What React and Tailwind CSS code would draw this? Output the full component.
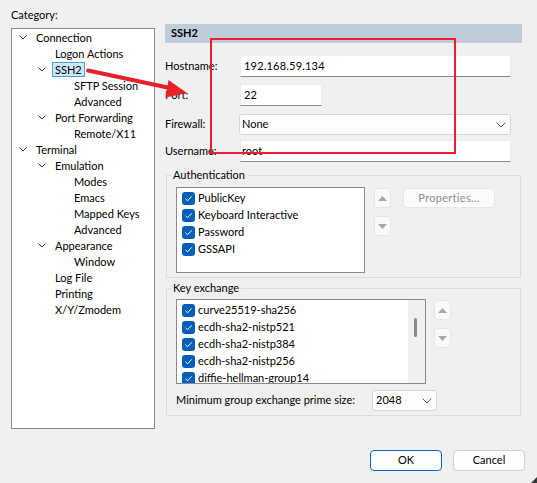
import React from "react";

const Chevron = () => (
  <svg width="8" height="5" viewBox="0 0 8 5">
    <path d="M0.5 0.5L4 4L7.5 0.5" fill="none" stroke="#2b2b2b" strokeWidth="1" />
  </svg>
);

const SelChevron = () => (
  <svg width="10" height="6" viewBox="0 0 10 6">
    <path d="M0.5 0.5L5 5L9.5 0.5" fill="none" stroke="#5a5a5a" strokeWidth="1" />
  </svg>
);

const Check = () => (
  <svg width="13" height="13" viewBox="0 0 13 13" className="shrink-0">
    <rect x="0" y="0" width="13" height="13" rx="3" fill="#005fb8" />
    <path d="M3.5 6.8L5.6 8.8L9.6 4.4" fill="none" stroke="#ffffff" strokeWidth="1" />
  </svg>
);

const Tri = ({ up }) => (
  <svg width="9" height="5" viewBox="0 0 9 5">
    {up ? <path d="M0 5L4.5 0L9 5Z" fill="#a8a8a8" /> : <path d="M0 0L4.5 5L9 0Z" fill="#a8a8a8" />}
  </svg>
);

const padCls = ["pl-[6px]", "pl-[25px]", "pl-[44px]"];

const tree = [
  { l: 0, t: "Connection", c: true },
  { l: 1, t: "Logon Actions" },
  { l: 1, t: "SSH2", c: true, sel: true },
  { l: 2, t: "SFTP Session" },
  { l: 2, t: "Advanced" },
  { l: 1, t: "Port Forwarding", c: true },
  { l: 2, t: "Remote/X11" },
  { l: 0, t: "Terminal", c: true },
  { l: 1, t: "Emulation", c: true },
  { l: 2, t: "Modes" },
  { l: 2, t: "Emacs" },
  { l: 2, t: "Mapped Keys" },
  { l: 2, t: "Advanced" },
  { l: 1, t: "Appearance", c: true },
  { l: 2, t: "Window" },
  { l: 1, t: "Log File" },
  { l: 1, t: "Printing" },
  { l: 1, t: "X/Y/Zmodem" },
];

const SmallBtn = ({ up }) => (
  <div className="w-[17px] h-[20px] flex items-center justify-center bg-[#f9f9f9] border border-[#e6e6e6] rounded-[3px]">
    <Tri up={up} />
  </div>
);

const Item = ({ t }) => (
  <div className="flex items-center h-[17px] gap-[3px] whitespace-nowrap">
    <Check />
    <span>{t}</span>
  </div>
);

export default function App() {
  return (
    <div
      className="relative w-[537px] h-[483px] bg-[#f0f0f0] text-[11px] text-black overflow-hidden"
      style={{ fontFamily: "Lato, 'Liberation Sans', sans-serif" }}
    >
      <div className="flex px-[11px] gap-[10px]">
        {/* Left column */}
        <div className="w-[144px] pt-[7px] flex flex-col">
          <div className="leading-[16px] h-[16px]">Category:</div>
          <div className="mt-[5px] h-[401px] bg-white border border-[#868a94]">
            {tree.map((r, i) => (
              <div key={i} className={`flex h-[16px] items-center ${padCls[r.l]}`}>
                <div className="w-[10px] flex justify-center">{r.c && <Chevron />}</div>
                <span
                  className={`ml-[5px] px-[2px] h-[15px] leading-[13px] border whitespace-nowrap ${
                    r.sel ? "border-[#4f9fe0] bg-[#cce8ff]" : "border-transparent"
                  }`}
                >
                  {r.t}
                </span>
              </div>
            ))}
          </div>
        </div>

        {/* Right column */}
        <div className="w-[357px] pt-[24px] flex flex-col">
          <div className="h-[19px] bg-[#bfcddb] pl-[6px] flex items-center font-bold">SSH2</div>

          <div className="flex items-center mt-[12px]">
            <span className="w-[75px]">Hostname:</span>
            <div className="w-[271px] h-[22px] bg-white border border-[#ececec] border-b-[#8a8a8a] flex items-center pl-[3px] tracking-[0.2px]">
              192.168.59.134
            </div>
          </div>
          <div className="flex items-center mt-[7px]">
            <span className="w-[75px]">Port:</span>
            <div className="w-[82px] h-[22px] bg-white border border-[#ececec] border-b-[#8a8a8a] flex items-center pl-[3px]">
              22
            </div>
          </div>
          <div className="flex items-center mt-[8px]">
            <span className="w-[75px]">Firewall:</span>
            <div className="ml-[-1px] w-[272px] h-[21px] bg-[#fdfdfd] border border-[#d6d6d6] rounded-[3px] flex items-center justify-between pl-[2px] pr-[4px]">
              <span>None</span>
              <SelChevron />
            </div>
          </div>
          <div className="flex items-center mt-[5px]">
            <span className="w-[75px]">Username:</span>
            <div className="w-[271px] h-[22px] bg-white border border-[#ececec] border-b-[#8a8a8a] flex items-center pl-[1px]">
              root
            </div>
          </div>

          <fieldset className="mt-[5px] ml-[1px] w-[355px] border border-[#dcdcdc] pl-[9px] pt-[4px] pb-[4px]">
            <legend className="ml-[-5px] px-[2px] leading-[16px]">Authentication</legend>
            <div className="flex items-start">
              <div className="w-[189px] h-[86px] bg-white border border-[#868a94] pl-[5px] pt-[2px]">
                <Item t="PublicKey" />
                <Item t="Keyboard Interactive" />
                <Item t="Password" />
                <Item t="GSSAPI" />
              </div>
              <div className="ml-[9px] pt-[1px] flex flex-col gap-[8px]">
                <SmallBtn up />
                <SmallBtn />
              </div>
              <div className="ml-[12px] mt-[1px] w-[92px] h-[20px] bg-[#fbfbfb] border border-[#e6e6e6] rounded-[4px] flex items-center justify-center text-[#8d8d8d] tracking-[0.3px]">
                Properties...
              </div>
            </div>
          </fieldset>

          <fieldset className="mt-[2px] ml-[1px] w-[355px] border border-[#dcdcdc] pl-[9px] pt-[3px] pb-[4px]">
            <legend className="ml-[-5px] px-[2px] leading-[16px]">Key exchange</legend>
            <div className="flex items-start">
              <div className="w-[250px] h-[85px] bg-white border border-[#868a94] flex overflow-hidden">
                <div className="flex-1 pl-[5px] pt-[2px]">
                  <Item t="curve25519-sha256" />
                  <Item t="ecdh-sha2-nistp521" />
                  <Item t="ecdh-sha2-nistp384" />
                  <Item t="ecdh-sha2-nistp256" />
                  <Item t="diffie-hellman-group14" />
                </div>
                <div className="w-[17px] bg-[#f0f0f0] pl-[6px] pt-[18px]">
                  <div className="w-[3px] h-[19px] rounded-full bg-[#8a8a8a]" />
                </div>
              </div>
              <div className="ml-[8px] pt-[1px] flex flex-col gap-[8px]">
                <SmallBtn up />
                <SmallBtn />
              </div>
            </div>
            <div className="flex items-center mt-[6px]">
              <span className="w-[196px] whitespace-nowrap">Minimum group exchange prime size:</span>
              <div className="w-[65px] h-[21px] bg-[#fdfdfd] border border-[#d6d6d6] rounded-[3px] flex items-center justify-between pl-[3px] pr-[4px]">
                <span>2048</span>
                <SelChevron />
              </div>
            </div>
          </fieldset>
        </div>
      </div>

      <div className="flex justify-end gap-[11px] pr-[12px] mt-[21px]">
        <div className="w-[72px] h-[21px] bg-white border border-[#0067c0] rounded-[4px] flex items-center justify-center">
          OK
        </div>
        <div className="w-[72px] h-[21px] bg-[#fdfdfd] border border-[#d0d0d0] rounded-[4px] flex items-center justify-center">
          Cancel
        </div>
      </div>

      {/* annotations */}
      <div className="absolute left-[210px] top-[38px] w-[246px] h-[116px] border-2 border-[#e8202a] pointer-events-none" />
      <svg className="absolute left-0 top-0 pointer-events-none" width="537" height="483" viewBox="0 0 537 483">
        <path d="M88 70.5 L170 88" stroke="#e8202a" strokeWidth="4" strokeLinecap="round" />
        <path d="M187 93 L168.5 80 L165.5 97.5 Z" fill="#e8202a" />
      </svg>
      <svg className="absolute right-0 bottom-0" width="6" height="6" viewBox="0 0 6 6">
        <path d="M6 0 L6 6 L0 6 Z" fill="#3a3a3a" />
      </svg>
    </div>
  );
}
